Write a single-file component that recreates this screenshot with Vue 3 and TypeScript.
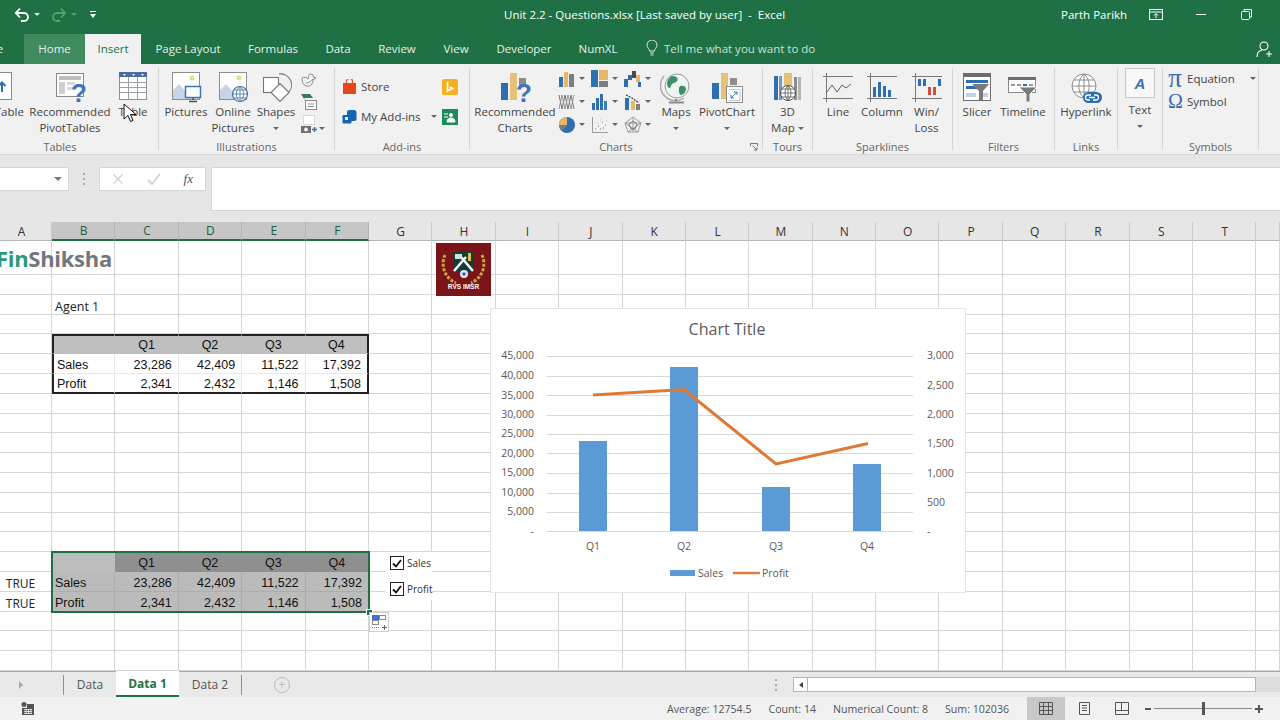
<script setup lang="ts">
interface Cell {
  text?: string
  cls: string[]
}

const columns = 'ABCDEFGHIJKLMNOPQRST'.split('').concat('')
const rowCount = 21
const selectedCols = 'BCDEF'

const table = [
  ['', 'Q1', 'Q2', 'Q3', 'Q4'],
  ['Sales', '23,286', '42,409', '11,522', '17,392'],
  ['Profit', '2,341', '2,432', '1,146', '1,508'],
]

const cells: Record<string, Cell> = {}
const at = (r: number, c: number): Cell => {
  const key = `${r}-${c}`
  if (!cells[key]) cells[key] = { cls: [] }
  return cells[key]
}

function placeTable(top: number, selected: boolean) {
  table.forEach((row, i) => {
    row.forEach((text, j) => {
      const cell = at(top + i, j + 1)
      cell.text = text
      cell.cls.push('arial', i === 0 ? 'centre' : j === 0 ? 'label' : 'num')
      if (selected) {
        cell.cls.push(i === 0 ? (j === 0 ? 'sel-corner' : 'sel-head') : 'sel-body')
      } else {
        cell.cls.push(i === 0 ? 'head' : 'plain')
        if (i === 0) cell.cls.push('t-top')
        if (i === 2) cell.cls.push('t-bottom')
        if (j === 0) cell.cls.push('t-left')
        if (j === 4) cell.cls.push('t-right')
      }
    })
  })
}

placeTable(4, false)
placeTable(15, true)
at(2, 1).text = 'Agent 1'
at(2, 1).cls.push('label', 'over')
at(16, 0).text = 'TRUE'
at(16, 0).cls.push('bool')
at(17, 0).text = 'TRUE'
at(17, 0).cls.push('bool')

const sheetCells: { key: string; r: number; c: number; text?: string; cls: string[] }[] = []
for (let r = 0; r < rowCount; r++) {
  for (let c = 0; c < columns.length; c++) {
    const found = cells[`${r}-${c}`]
    sheetCells.push({ key: `${r}-${c}`, r, c, text: found?.text, cls: found?.cls ?? [] })
  }
}

// chart data, in page coordinates so it can be read against the screenshot
const baseY = 531
const gridYs = [356, 376, 395, 415, 434, 453, 473, 493, 512, 531]
const leftAxis = [
  ['45,000', 355], ['40,000', 375], ['35,000', 395], ['30,000', 414], ['25,000', 433],
  ['20,000', 453], ['15,000', 472], ['10,000', 492], ['5,000', 511], ['-', 531],
] as const
const rightAxis = [
  ['3,000', 355], ['2,500', 385], ['2,000', 414], ['1,500', 443], ['1,000', 473], ['500', 502], ['-', 531],
] as const
const bars = [
  { name: 'Q1', x: 579, top: 441 },
  { name: 'Q2', x: 670, top: 367 },
  { name: 'Q3', x: 762, top: 487 },
  { name: 'Q4', x: 853, top: 464 },
]
const profitLine = '593,395 684,389.5 776,464 868,443.5'
</script>

<template>
  <div class="excel">
    <header class="titlebar">
      <div class="qat">
        <svg class="undo" width="18" height="18" viewBox="0 0 18 18" fill="none" stroke="#fff" stroke-width="1.8">
          <path d="M3 7h8a4 4 0 0 1 0 8H8" />
          <path d="M7 2.5 2.8 7 7 11.5" />
        </svg>
        <i class="caret white"></i>
        <svg class="redo" width="18" height="18" viewBox="0 0 18 18" fill="none" stroke="#5c9c79" stroke-width="1.8">
          <path d="M15 7H7a4 4 0 0 0 0 8h3" />
          <path d="M11 2.5 15.200 7 11 11.500" />
        </svg>
        <i class="caret dim"></i>
        <svg class="custom" width="8" height="8" viewBox="0 0 8 8" fill="#fff">
          <rect x="1" y="0" width="6" height="1" />
          <path d="M1 3h6L4 7z" />
        </svg>
      </div>
      <div class="doc-title">Unit 2.2 - Questions.xlsx [Last saved by user]&nbsp; -&nbsp; Excel</div>
      <div class="user">Parth Parikh</div>
      <svg class="win-a" width="14" height="12" viewBox="0 0 14 12" fill="none" stroke="#fff">
        <rect x="0.500" y="0.500" width="13" height="10" />
        <path d="M0.500 3h13M7 9V5M5 6.500l2-2 2 2" />
      </svg>
      <i class="win-min"></i>
      <svg class="win-max" width="11" height="11" viewBox="0 0 11 11" fill="none" stroke="#fff">
        <rect x="0.500" y="2.500" width="8" height="8" rx="1" />
        <path d="M3 2.500V0.500h7.500V8H8.500" />
      </svg>
    </header>

    <nav class="tabs">
      <span class="tab file">File</span>
      <span class="tab home">Home</span>
      <span class="tab insert">Insert</span>
      <span class="tab t94">Page Layout</span>
      <span class="tab t76">Formulas</span>
      <span class="tab t54">Data</span>
      <span class="tab t64">Review</span>
      <span class="tab t54">View</span>
      <span class="tab t82">Developer</span>
      <span class="tab t66">NumXL</span>
      <svg class="bulb" width="12" height="16" viewBox="0 0 12 16" fill="none" stroke="#d5e6dc">
        <path d="M3.500 11C3.500 8.500 1 8 1 5a5 5 0 0 1 10 0c0 3-2.500 3.500-2.500 6z" />
        <path d="M4 13h4M4.500 15h3" />
      </svg>
      <span class="tell">Tell me what you want to do</span>
      <svg class="share" width="17" height="17" viewBox="0 0 17 17" fill="none" stroke="#fff" stroke-width="1.100">
        <circle cx="8" cy="5" r="4" />
        <path d="M1 16c0-4 2.500-6.500 5-7M10 13h6M13 10v6" />
      </svg>
    </nav>

    <section class="ribbon">
      <!-- Tables -->
      <div class="group g-tables">
        <div class="body pl5">
          <div class="rb w58">
            <svg width="32" height="32" viewBox="0 0 32 32">
              <rect x="4.500" y="0.500" width="27" height="27" fill="#fff" stroke="#8a8a8a" />
              <path d="M22 20v-9M18.500 14l3.500-3.500 3.500 3.500" fill="none" stroke="#2f6db5" stroke-width="2" />
            </svg>
            <span>PivotTable</span>
          </div>
          <div class="rb w84 ml3">
            <svg width="32" height="32" viewBox="0 0 32 32">
              <rect x="2.500" y="1.500" width="27" height="23" fill="#fff" stroke="#8a8a8a" />
              <rect x="5" y="4" width="22" height="4" fill="#bdbdbd" />
              <rect x="5" y="10" width="6" height="12" fill="#cfcfcf" />
              <rect x="13" y="10" width="8" height="3" fill="#d8d8d8" />
              <rect x="13" y="15" width="6" height="3" fill="#d8d8d8" />
              <text x="17" y="30" class="qmark">?</text>
            </svg>
            <span>Recommended<br />PivotTables</span>
          </div>
          <div class="rb w42">
            <svg width="32" height="32" viewBox="0 0 32 32">
              <rect x="2.500" y="0.500" width="27" height="27" fill="#fff" stroke="#8b8f98" />
              <rect x="2" y="0" width="28" height="5" fill="#4c6c9c" />
              <path d="M6 2h3L7.500 4zM15 2h3l-1.500 2zM24 2h3l-1.500 2z" fill="#fff" />
              <path d="M2.500 10.500h27M2.500 15.500h27M2.500 20.500h27M11.500 5v22M20.500 5v22" stroke="#9a9ea6" fill="none" />
            </svg>
            <span>Table</span>
          </div>
        </div>
        <div class="caption">Tables</div>
      </div>
      <i class="sep"></i>

      <!-- Illustrations -->
      <div class="group g-illus">
        <div class="body pl6">
          <div class="rb w42">
            <svg width="32" height="32" viewBox="0 0 32 32">
              <rect x="2.500" y="0.500" width="27" height="27" fill="#fff" stroke="#8d8d8d" />
              <circle cx="22" cy="6" r="2.500" fill="#ecd98a" />
              <path d="M3 27V18l6-6 8 9 3-2 9 8z" fill="#c9d5e6" />
              <rect x="15.500" y="14.500" width="15" height="11" fill="#fff" stroke="#3a78a8" stroke-width="1.500" />
              <path d="M23 26v2M19 29.500h8" stroke="#4e4e4e" stroke-width="1.500" />
            </svg>
            <span>Pictures</span>
          </div>
          <div class="rb w46 ml3">
            <svg width="32" height="32" viewBox="0 0 32 32">
              <rect x="2.500" y="0.500" width="27" height="27" fill="#fff" stroke="#8d8d8d" />
              <circle cx="22" cy="6" r="2.500" fill="#ecd98a" />
              <path d="M3 27V18l6-6 8 9 3-2 9 8z" fill="#c9d5e6" />
              <circle cx="23" cy="22" r="7.500" fill="#fff" stroke="#40729e" stroke-width="1.200" />
              <path d="M15.500 22h15M23 14.500v15M17 18h12M17 26h12M23 14.500c-5 4-5 11 0 15M23 14.500c5 4 5 11 0 15" fill="none" stroke="#40729e" stroke-width="0.800" />
            </svg>
            <span>Online<br />Pictures</span>
          </div>
          <div class="rb w40">
            <svg width="32" height="32" viewBox="0 0 32 32" fill="none" stroke="#777" stroke-width="1.100">
              <path d="M19 2a11 11 0 0 1 9 19" />
              <rect x="3.500" y="5.500" width="15" height="15" fill="#fff" />
              <path d="M20 11.500 29 20.500 20 29.500 11 20.500z" fill="#fff" />
            </svg>
            <span>Shapes</span>
            <i class="caret lone"></i>
          </div>
          <div class="mini-stack">
            <svg width="18" height="18" viewBox="0 0 18 18" fill="none" stroke="#8a8a8a">
              <path d="M2 7c2-1 4-1 6 1 1-3 0-5 3-5 2 0 3 2 2 3l3 1-3 2c0 4-3 7-6 6-3 0-5-3-5-8z" />
              <path d="M6 12c3 0 5-2 7-4" stroke="#7fa489" />
            </svg>
            <svg width="18" height="18" viewBox="0 0 18 18">
              <path d="M1 1h9l3 4H4l2 4z" fill="#2f7d5a" />
              <rect x="5.500" y="7.500" width="11" height="9" fill="#fff" stroke="#8a8a8a" />
              <path d="M8 11h6M8 13.500h6" stroke="#8a8a8a" />
            </svg>
            <div class="shot">
              <svg width="18" height="20" viewBox="0 0 18 20">
                <rect x="3.500" y="0.500" width="11" height="9" fill="#fff" stroke="#bbb" stroke-dasharray="1 1" />
                <rect x="1" y="11" width="10" height="7" fill="#6f6f6f" />
                <circle cx="6" cy="14.500" r="2" fill="#f1f1f1" />
                <path d="M12 14.500h5M14.500 12v5" stroke="#40729e" stroke-width="1.500" />
              </svg>
              <i class="caret"></i>
            </div>
          </div>
        </div>
        <div class="caption">Illustrations</div>
      </div>
      <i class="sep"></i>

      <!-- Add-ins -->
      <div class="group g-addins">
        <div class="body pl7">
          <div class="addin-rows">
            <div class="addin-row">
              <svg width="15" height="15" viewBox="0 0 15 15">
                <path d="M1 4h13v11H1z" fill="#e5471f" />
                <path d="M4.500 5V2.500a3 3 0 0 1 6 0V5" fill="none" stroke="#e5471f" stroke-width="1.200" />
              </svg>
              <span>Store</span>
            </div>
            <div class="addin-row">
              <svg width="15" height="15" viewBox="0 0 15 15" fill="#1464b4">
                <rect x="0.500" y="6" width="9" height="8.500" rx="1" />
                <rect x="5" y="1" width="9.500" height="11" rx="2.500" />
                <rect x="3" y="8" width="3" height="3" fill="#f1f1f1" />
              </svg>
              <span>My Add-ins</span>
              <i class="caret push"></i>
            </div>
          </div>
          <div class="addin-side">
            <svg width="16" height="16" viewBox="0 0 16 16">
              <rect width="16" height="16" rx="2" fill="#f6b01e" />
              <path d="M5.500 3v9l5-2.500-2.500-1.500" fill="none" stroke="#fff" stroke-width="1.700" />
            </svg>
            <svg width="16" height="16" viewBox="0 0 16 16">
              <rect width="16" height="16" fill="#1c8a5a" />
              <circle cx="9" cy="6" r="2" fill="#fff" />
              <path d="M2 5h4M2 8h4M5 13c0-3 2-4 4-4s4 1 4 4z" stroke="#fff" fill="#fff" />
            </svg>
          </div>
        </div>
        <div class="caption">Add-ins</div>
      </div>
      <i class="sep"></i>

      <!-- Charts -->
      <div class="group g-charts">
        <div class="body pl5">
          <div class="rb w80">
            <svg width="32" height="32" viewBox="0 0 32 32">
              <rect x="2" y="11" width="7" height="17" fill="#2f6fb0" />
              <rect x="11" y="1" width="7" height="27" fill="#e4c27a" />
              <rect x="20" y="6" width="7" height="8" fill="#8c8c8c" />
              <text x="17" y="30" class="qmark">?</text>
            </svg>
            <span>Recommended<br />Charts</span>
          </div>
          <div class="mini-grid">
            <div class="mini">
              <svg width="18" height="18" viewBox="0 0 18 18">
                <rect x="1" y="7" width="4" height="10" fill="#2f6fb0" /><rect x="6" y="2" width="4" height="15" fill="#e4b865" /><rect x="11" y="4" width="5" height="13" fill="#7d7d7d" />
              </svg>
              <i class="caret"></i>
            </div>
            <div class="mini">
              <svg width="18" height="18" viewBox="0 0 18 18">
                <rect x="0" y="0" width="7" height="17" fill="#2f6fb0" /><rect x="8" y="0" width="9" height="10" fill="#e4b865" /><rect x="8" y="11" width="9" height="6" fill="#7d7d7d" />
              </svg>
              <i class="caret"></i>
            </div>
            <div class="mini">
              <svg width="18" height="18" viewBox="0 0 18 18">
                <rect x="0" y="9" width="4" height="8" fill="#2f6fb0" /><rect x="4" y="5" width="4" height="5" fill="#2f6fb0" /><rect x="8" y="1" width="4" height="7" fill="#4a4a4a" /><rect x="12" y="5" width="4" height="7" fill="#e4b865" /><rect x="14" y="12" width="3" height="5" fill="#2f6fb0" />
              </svg>
              <i class="caret"></i>
            </div>
            <div class="mini">
              <svg width="18" height="18" viewBox="0 0 18 18" fill="none" stroke="#666" stroke-width="0.900">
                <path d="M1 2l3 14 3-14 3 14 3-14 3 14" /><path d="M1 16l3-14 3 14 3-14 3 14 3-14" stroke="#8d8d8d" />
              </svg>
              <i class="caret"></i>
            </div>
            <div class="mini">
              <svg width="18" height="18" viewBox="0 0 18 18">
                <rect x="1" y="10" width="3" height="7" fill="#2f6fb0" /><rect x="5" y="5" width="3" height="12" fill="#2f6fb0" /><rect x="9" y="1" width="3" height="16" fill="#2f6fb0" /><rect x="13" y="8" width="3" height="9" fill="#3b80bf" />
              </svg>
              <i class="caret"></i>
            </div>
            <div class="mini">
              <svg width="18" height="18" viewBox="0 0 18 18">
                <rect x="1" y="5" width="4" height="12" fill="#2f6fb0" /><rect x="7" y="8" width="4" height="9" fill="#e4b865" /><rect x="12" y="11" width="4" height="6" fill="#7d7d7d" />
                <path d="M2 2l6 3 7 5" fill="none" stroke="#444" stroke-width="1.200" stroke-dasharray="2 1" />
              </svg>
              <i class="caret"></i>
            </div>
            <div class="mini">
              <svg width="18" height="18" viewBox="0 0 18 18">
                <circle cx="9" cy="9" r="8" fill="#2f6fb0" /><path d="M9 9V1a8 8 0 0 0-8 8z" fill="#e4b865" /><path d="M9 9H1a8 8 0 0 0 3 6z" fill="#7d7d7d" />
              </svg>
              <i class="caret"></i>
            </div>
            <div class="mini">
              <svg width="18" height="18" viewBox="0 0 18 18" fill="none">
                <path d="M1.500 1v15.500H17" stroke="#9a9a9a" />
                <path d="M4 13h1M7 10h1M9 13h1M11 6h1M14 9h1M12 12h1" stroke="#557aa5" />
                <path d="M6 7h1M9 4h1M15 5h1" stroke="#d9b36a" />
              </svg>
              <i class="caret"></i>
            </div>
            <div class="mini">
              <svg width="18" height="18" viewBox="0 0 18 18" fill="none" stroke="#8c8c8c" stroke-width="0.800">
                <path d="M9 1l8 6-3 9H4L1 7z" /><path d="M9 1v15M1 7l13 9M17 7 4 16M1 7h16" /><path d="M9 5l4 3-2 5H7L5 8z" stroke="#666" />
              </svg>
              <i class="caret"></i>
            </div>
          </div>
          <div class="rb w38">
            <svg width="32" height="32" viewBox="0 0 32 32">
              <path d="M4 4a15 15 0 0 0 20 22" fill="none" stroke="#a9a9a9" stroke-width="1.500" />
              <circle cx="17" cy="14" r="12" fill="#eef4f1" stroke="#9a9a9a" />
              <path d="M12 4c4 0 7 2 5 5s-5 1-6 5-4 1-4-2 2-7 5-8zM20 14c3-1 6 0 6 3s-3 6-5 6-3-7-1-9z" fill="#3d8f68" />
              <path d="M16 27v2M9 30.500h15" stroke="#8a8a8a" stroke-width="2" />
            </svg>
            <span>Maps</span>
            <i class="caret lone"></i>
          </div>
          <div class="rb w64">
            <svg width="32" height="32" viewBox="0 0 32 32">
              <rect x="1" y="11" width="7" height="16" fill="#2f6fb0" />
              <rect x="10" y="1" width="7" height="26" fill="#e4c27a" />
              <rect x="19" y="6" width="7" height="7" fill="#8c8c8c" />
              <rect x="15.500" y="14.500" width="16" height="16" fill="#fff" stroke="#8a8a8a" />
              <path d="M18 17.500h11v11H18" fill="none" stroke="#c4c4c4" />
              <path d="M20 26l6-6M23 20h3v3M20 23v3h3" fill="none" stroke="#3a78a8" />
            </svg>
            <span>PivotChart</span>
            <i class="caret lone"></i>
          </div>
        </div>
        <div class="caption">Charts</div>
        <svg class="launcher" width="8" height="8" viewBox="0 0 8 8" fill="none" stroke="#777">
          <path d="M0.500 3V0.500H7.500V3" /><path d="M2.500 2.500 7 7M7 4v3H4" />
        </svg>
      </div>
      <i class="sep"></i>

      <!-- Tours -->
      <div class="group g-tours">
        <div class="body">
          <div class="rb w49">
            <svg width="32" height="32" viewBox="0 0 32 32">
              <rect x="2" y="4" width="4" height="24" fill="#2f6fb0" /><rect x="7" y="4" width="3" height="24" fill="#6f9cc9" />
              <rect x="12" y="1" width="8" height="14" fill="#e4c27a" />
              <rect x="22" y="5" width="3" height="23" fill="#8c8c8c" /><rect x="26" y="5" width="3" height="23" fill="#b4b4b4" />
              <circle cx="16" cy="21" r="7.500" fill="#fff" stroke="#555" />
              <path d="M8.500 21h15M16 13.500v15M10 17h12M10 25h12M16 13.500c-4 4-4 11 0 15M16 13.500c4 4 4 11 0 15" fill="none" stroke="#555" stroke-width="0.800" />
            </svg>
            <span>3D<br />Map <i class="caret inline"></i></span>
          </div>
        </div>
        <div class="caption">Tours</div>
      </div>
      <i class="sep"></i>

      <!-- Sparklines -->
      <div class="group g-spark">
        <div class="body">
          <div class="rb w50">
            <svg width="32" height="32" viewBox="0 0 32 32" fill="none" stroke="#777">
              <path d="M1 4.500h30M1 26.500h30M4.500 1v29" />
              <path d="M5 20l5-7 5 7 5-7 4 3 5-4" stroke="#5c5c5c" />
            </svg>
            <span>Line</span>
          </div>
          <div class="rb w38">
            <svg width="32" height="32" viewBox="0 0 32 32">
              <path d="M1 4.500h30M1 26.500h30M4.500 1v29" fill="none" stroke="#777" />
              <rect x="7" y="15" width="3" height="10" fill="#2f6fb0" /><rect x="12" y="10" width="3" height="15" fill="#2f6fb0" /><rect x="17" y="14" width="3" height="11" fill="#2f6fb0" /><rect x="22" y="18" width="3" height="7" fill="#2f6fb0" />
            </svg>
            <span>Column</span>
          </div>
          <div class="rb w51">
            <svg width="32" height="32" viewBox="0 0 32 32">
              <path d="M1 4.500h30M1 26.500h30M4.500 1v29" fill="none" stroke="#777" />
              <rect x="7" y="7" width="3" height="7" fill="#2f6fb0" /><rect x="12" y="7" width="3" height="7" fill="#2f6fb0" /><rect x="17" y="15" width="3" height="8" fill="#c8533a" /><rect x="22" y="15" width="3" height="8" fill="#c8533a" /><rect x="27" y="7" width="3" height="7" fill="#2f6fb0" />
            </svg>
            <span>Win/<br />Loss</span>
          </div>
        </div>
        <div class="caption">Sparklines</div>
      </div>
      <i class="sep"></i>

      <!-- Filters -->
      <div class="group g-filters">
        <div class="body">
          <div class="rb w48">
            <svg width="32" height="32" viewBox="0 0 32 32">
              <rect x="2.500" y="1.500" width="27" height="27" fill="#fff" stroke="#6e6e6e" />
              <rect x="2" y="1" width="28" height="4" fill="#6e6e6e" />
              <rect x="5" y="8" width="22" height="3" fill="#2e6eb0" />
              <rect x="5" y="14" width="11" height="3" fill="#2e6eb0" />
              <rect x="5" y="21" width="10" height="4" fill="#c5d2e3" />
              <rect x="21" y="21" width="6" height="4" fill="#c5d2e3" />
              <path d="M11 12h17l-6 7v9h-4v-9z" fill="#7a7a7a" />
            </svg>
            <span>Slicer</span>
          </div>
          <div class="rb w44">
            <svg width="32" height="32" viewBox="0 0 32 32">
              <rect x="1.500" y="5.500" width="27" height="15" fill="#fff" stroke="#8a8a8a" />
              <rect x="1" y="5" width="28" height="3" fill="#6e6e6e" />
              <path d="M4 13h4M10 13h4" stroke="#9a9a9a" stroke-width="2" />
              <path d="M16 13h4" stroke="#2e6eb0" stroke-width="2" />
              <path d="M22 13h4" stroke="#9a9a9a" stroke-width="2" />
              <path d="M12 15h18l-7 7v8h-4v-8z" fill="#7a7a7a" stroke="#f1f1f1" />
            </svg>
            <span>Timeline</span>
          </div>
        </div>
        <div class="caption">Filters</div>
      </div>
      <i class="sep"></i>

      <!-- Links -->
      <div class="group g-links">
        <div class="body">
          <div class="rb w62">
            <svg width="32" height="32" viewBox="0 0 32 32">
              <circle cx="14" cy="14" r="12" fill="#fff" stroke="#8c8c8c" />
              <path d="M2 14h24M14 2v24M4 8h20M4 20h20M14 2c-7 6-7 18 0 24M14 2c7 6 7 18 0 24" fill="none" stroke="#8c8c8c" />
              <rect x="13" y="20" width="19" height="11" rx="5.500" fill="#2b6cb0" />
              <path d="M21 23h-3a2.500 2.500 0 0 0 0 5h2M24 23h2a2.500 2.500 0 0 1 0 5h-3M19 25.500h6" fill="none" stroke="#fff" stroke-width="1.300" />
            </svg>
            <span>Hyperlink</span>
          </div>
        </div>
        <div class="caption">Links</div>
      </div>
      <i class="sep"></i>

      <!-- Text -->
      <div class="group g-text">
        <div class="text-btn">
          <div class="text-box"><span>A</span></div>
          <span>Text</span>
          <i class="caret lone"></i>
        </div>
      </div>
      <i class="sep"></i>

      <!-- Symbols -->
      <div class="group g-symbols">
        <div class="body pl5 symbols">
          <div class="sym-row"><b class="sym-glyph pi">π</b><span>Equation</span><i class="caret"></i></div>
          <div class="sym-row"><b class="sym-glyph">Ω</b><span>Symbol</span></div>
        </div>
        <div class="caption">Symbols</div>
      </div>
      <i class="sep"></i>
    </section>

    <section class="formula">
      <div class="name-box"><i class="caret grey"></i></div>
      <i class="grip"></i>
      <div class="fx-box">
        <svg width="12" height="12" viewBox="0 0 12 12" stroke="#d2d2d2" stroke-width="1.400" fill="none"><path d="M1.500 1.500l9 9M10.500 1.500l-9 9" /></svg>
        <svg width="14" height="12" viewBox="0 0 14 12" stroke="#d2d2d2" stroke-width="1.800" fill="none"><path d="M1 7l4 4 8-10" /></svg>
        <em>fx</em>
      </div>
      <div class="input"></div>
    </section>

    <div class="col-head">
      <div
        v-for="col in columns"
        :key="col"
        class="col"
        :class="{ on: col !== '' && selectedCols.includes(col), first: col === 'A' }"
      >
        {{ col }}
      </div>
    </div>

    <main class="sheet">
      <div
        v-for="c in sheetCells"
        :key="c.key"
        class="cell"
        :class="c.cls"
        :style="{ gridRow: c.r + 1, gridColumn: c.c + 1 }"
      >
        {{ c.text }}
      </div>
      <div class="brand"><span class="fin">Fin</span><span class="shik">Shiksha</span></div>
      <div class="selection">
        <i class="handle"></i>
        <svg class="quick" width="20" height="20" viewBox="0 0 20 20">
          <rect x="0.500" y="0.500" width="19" height="19" fill="#fff" stroke="#cfcfcf" />
          <rect x="3" y="3" width="7" height="5" fill="#3f6fcf" />
          <rect x="10.500" y="3.500" width="6" height="4" fill="#fff" stroke="#8a8a8a" />
          <rect x="3.500" y="8.500" width="6" height="4" fill="#fff" stroke="#8a8a8a" />
          <path d="M3 15.500h8" stroke="#777" stroke-dasharray="1 1" />
          <path d="M13 15.500h5M15.500 13v5" stroke="#666" />
        </svg>
      </div>

      <svg class="logo" width="55" height="53" viewBox="0 0 55 53">
        <rect width="55" height="53" fill="#7b1418" />
        <path d="M9 12a21 21 0 0 0 11 28M46 12a21 21 0 0 1-11 28" fill="none" stroke="#c9a33f" stroke-width="3" stroke-dasharray="3 1.500" />
        <path d="M17 9h21v16l-10 9-11-9z" fill="#123f34" />
        <path d="M18 28 30 14M37 28 25 14" stroke="#fff" stroke-width="2.500" />
        <rect x="19" y="11" width="7" height="5" fill="#cfe0e8" />
        <rect x="32" y="10" width="3" height="8" fill="#d8c24a" />
        <circle cx="28" cy="31" r="4" fill="#dfe6f4" />
        <circle cx="28" cy="31" r="1.800" fill="#4a5fb5" />
        <text x="27.500" y="46" class="logo-text">RVS IMSR</text>
      </svg>

      <div class="chart">
        <svg width="474" height="283" viewBox="491 309 474 283">
          <text x="727" y="335" class="c-title">Chart Title</text>
          <path
            v-for="y in gridYs"
            :key="y"
            :d="`M547 ${y + 0.5}H913`"
            stroke="#d9d9d9"
            fill="none"
          />
          <rect
            v-for="bar in bars"
            :key="bar.name"
            :x="bar.x"
            :y="bar.top"
            width="28"
            :height="baseY - bar.top"
            fill="#5b9bd5"
          />
          <polyline :points="profitLine" fill="none" stroke="#de7a33" stroke-width="3" />
          <text v-for="t in leftAxis" :key="t[0]" x="534" :y="t[1] + 4" class="c-label end">{{ t[0] }}</text>
          <text v-for="t in rightAxis" :key="t[0]" x="927" :y="t[1] + 4" class="c-label">{{ t[0] }}</text>
          <text v-for="bar in bars" :key="bar.name" :x="bar.x + 14" y="550" class="c-label mid">{{ bar.name }}</text>
          <rect x="670" y="570" width="25" height="6" fill="#5b9bd5" />
          <text x="698" y="577" class="c-label">Sales</text>
          <path d="M733 573H760" stroke="#de7a33" stroke-width="2.400" />
          <text x="762" y="577" class="c-label">Profit</text>
        </svg>
      </div>

      <div class="checks">
        <label class="check"><i><svg width="10" height="9" viewBox="0 0 10 9" fill="none" stroke="#111" stroke-width="1.800"><path d="M1 4.500 4 7.500 9 1" /></svg></i>Sales</label>
        <label class="check"><i><svg width="10" height="9" viewBox="0 0 10 9" fill="none" stroke="#111" stroke-width="1.800"><path d="M1 4.500 4 7.500 9 1" /></svg></i>Profit</label>
      </div>
    </main>

    <footer class="sheet-tabs">
      <i class="prev"></i>
      <i class="bar"></i>
      <span class="s-tab w52">Data</span>
      <span class="s-tab w63 active">Data 1</span>
      <span class="s-tab w62">Data 2</span>
      <i class="bar"></i>
      <span class="add">+</span>
      <i class="grip h"></i>
      <div class="h-scroll"><span class="arrow"></span></div>
      <div class="h-rest"></div>
    </footer>

    <footer class="status">
      <svg class="macro" width="14" height="14" viewBox="0 0 14 14">
        <circle cx="3" cy="2.500" r="2.500" fill="#555" />
        <path d="M6 2h7v11H1V6h5z" fill="#555" />
        <path d="M3 7.500h8M3 9.500h8M3 11.500h8M5 7v5M7.500 7v5M10 7v5" stroke="#f1f1f1" stroke-width="0.800" />
      </svg>
      <div class="stats">
        <span>Average: 12754.5</span>
        <span>Count: 14</span>
        <span>Numerical Count: 8</span>
        <span>Sum: 102036</span>
      </div>
      <div class="views">
        <div class="view active">
          <svg width="14" height="13" viewBox="0 0 14 13" fill="none" stroke="#555">
            <path d="M0.500 0.500h13v12h-13zM0.500 4.500h13M0.500 8.500h13M4.500 0.500v12M9.500 0.500v12" />
          </svg>
        </div>
        <div class="view">
          <svg width="11" height="13" viewBox="0 0 11 13" fill="none" stroke="#555">
            <path d="M0.500 0.500h10v12h-10zM3 3.500h5M3 6h5M3 8.500h5" />
          </svg>
        </div>
        <div class="view">
          <svg width="14" height="13" viewBox="0 0 14 13" fill="none" stroke="#555">
            <path d="M0.500 0.500h13v12h-13zM0.500 8.500h13M6.500 0.500v8" />
          </svg>
        </div>
      </div>
      <div class="zoom">
        <i class="z-minus"></i>
        <div class="z-track"><i class="z-thumb"></i></div>
        <i class="z-plus"></i>
      </div>
    </footer>

    <svg class="cursor" width="14" height="21" viewBox="0 0 14 21">
      <path d="M1 1v15l4-3.500 2.500 6 2.500-1-2.500-6H13z" fill="#fff" stroke="#111" />
    </svg>
  </div>
</template>

<style>
html,
body {
  margin: 0;
  background: #fff;
  overflow: hidden;
}
</style>

<style scoped>
.excel {
  position: relative;
  display: flex;
  flex-direction: column;
  width: 1280px;
  height: 720px;
  overflow: hidden;
  font-family: 'Open Sans', 'Noto Sans', sans-serif;
  font-size: 11.5px;
  color: #444;
}
i {
  display: block;
  font-style: normal;
}
svg {
  display: block;
  flex: none;
}

/* title bar + tabs */
.titlebar {
  display: flex;
  align-items: center;
  height: 32px;
  flex: none;
  padding-bottom: 3px;
  box-sizing: border-box;
  background: #1f7145;
  color: #fff;
  font-size: 11.5px;
}
.qat {
  display: flex;
  align-items: center;
  width: 504px;
  flex: none;
  padding-left: 13px;
  box-sizing: border-box;
}
.redo {
  margin-left: 10px;
}
.custom {
  margin-left: 12px;
}
.doc-title {
  width: 557px;
  flex: none;
  white-space: nowrap;
}
.user {
  width: 88px;
  flex: none;
}
.win-min {
  width: 10px;
  height: 1px;
  background: #fff;
  margin-left: 33px;
}
.win-max {
  margin-left: 35px;
}
.tabs {
  display: flex;
  align-items: stretch;
  height: 32px;
  flex: none;
  padding-top: 2px;
  box-sizing: border-box;
  background: #1f7145;
  color: #e4f0e9;
  font-size: 11.5px;
}
.tab {
  display: flex;
  align-items: center;
  justify-content: center;
  flex: none;
  padding-bottom: 2px;
  box-sizing: border-box;
}
.file {
  width: 60px;
  margin-left: -36px;
}
.home {
  width: 61px;
  background: #3f8a5f;
}
.insert {
  width: 56px;
  background: #f1f1f1;
  color: #217346;
}
.t94 {
  width: 94px;
}
.t76 {
  width: 76px;
}
.t54 {
  width: 54px;
}
.t64 {
  width: 64px;
}
.t82 {
  width: 82px;
}
.t66 {
  width: 66px;
}
.bulb {
  align-self: center;
  margin-left: 15px;
  margin-bottom: 2px;
}
.tell {
  align-self: center;
  margin-left: 6px;
  margin-bottom: 2px;
  color: #c9e0d3;
  white-space: nowrap;
}
.share {
  align-self: center;
  margin-left: auto;
  margin-right: 7px;
}

/* ribbon */
.ribbon {
  display: flex;
  height: 91px;
  flex: none;
  padding-top: 4px;
  box-sizing: border-box;
  background: #f1f1f1;
  overflow: hidden;
  border-bottom: 1px solid #d8d8d8;
}
.sep {
  width: 1px;
  height: 82px;
  flex: none;
  background: #d4d4d4;
}
.group {
  position: relative;
  display: flex;
  flex-direction: column;
  flex: none;
}
.g-tables {
  width: 196px;
  margin-left: -38px;
}
.g-illus {
  width: 175px;
}
.g-addins {
  width: 134px;
}
.g-charts {
  width: 292px;
}
.g-tours {
  width: 49px;
}
.g-spark {
  width: 139px;
}
.g-filters {
  width: 101px;
}
.g-links {
  width: 62px;
}
.g-text {
  width: 44px;
}
.g-symbols {
  width: 95px;
}
.body {
  display: flex;
  height: 68px;
  flex: none;
  box-sizing: border-box;
  padding-top: 4px;
}
.pl5 {
  padding-left: 5px;
}
.pl6 {
  padding-left: 6px;
}
.pl7 {
  padding-left: 7px;
}
.ml3 {
  margin-left: 3px;
}
.caption {
  text-align: center;
  line-height: 22px;
  font-size: 11px;
  color: #666;
}
.launcher {
  position: absolute;
  right: 4px;
  top: 75px;
}
.rb {
  display: flex;
  flex-direction: column;
  align-items: center;
  flex: none;
  text-align: center;
  line-height: 16px;
  white-space: nowrap;
}
.w38 { width: 38px; }
.w40 { width: 40px; }
.w42 { width: 42px; }
.w44 { width: 44px; }
.w46 { width: 46px; }
.w48 { width: 48px; }
.w49 { width: 49px; }
.w50 { width: 50px; }
.w51 { width: 51px; }
.w52 { width: 52px; }
.w58 { width: 58px; }
.w62 { width: 62px; }
.w63 { width: 63px; }
.w64 { width: 64px; }
.w80 { width: 80px; }
.w84 { width: 84px; }
.qmark {
  font-family: 'Liberation Sans', sans-serif;
  font-size: 26px;
  font-weight: 700;
  fill: #3f74b5;
}
.caret {
  width: 0;
  height: 0;
  flex: none;
  border-left: 3px solid transparent;
  border-right: 3px solid transparent;
  border-top: 3px solid #666;
}
.caret.white {
  border-top-color: #d8e8df;
  margin-left: 3px;
}
.caret.dim {
  border-top-color: #5c9c79;
  margin-left: 3px;
}
.caret.grey {
  border-left-width: 4px;
  border-right-width: 4px;
  border-top-width: 4px;
  border-top-color: #777;
}
.caret.lone {
  margin-top: 7px;
}
.caret.inline {
  display: inline-block;
  vertical-align: middle;
}
.mini-stack {
  display: flex;
  flex-direction: column;
  align-items: flex-start;
  gap: 4px;
  margin-left: 4px;
  margin-top: -1px;
}
.shot {
  display: flex;
  align-items: flex-start;
  gap: 1px;
}
.shot .caret {
  margin-top: 12px;
}
.addin-rows {
  display: flex;
  flex-direction: column;
  gap: 8px;
  width: 100px;
  flex: none;
  padding-top: 3px;
}
.addin-row {
  display: flex;
  align-items: center;
  gap: 4px;
  height: 22px;
}
.push {
  margin-left: auto;
  margin-right: 5px;
}
.addin-side {
  display: flex;
  flex-direction: column;
  gap: 14px;
  padding-top: 7px;
}
.mini-grid {
  display: grid;
  grid-template-columns: repeat(3, 33px);
  grid-auto-rows: 23px;
  width: 99px;
  flex: none;
  margin: -5px 0 0 3px;
}
.mini {
  display: flex;
  align-items: center;
  gap: 3px;
}
.text-btn {
  display: flex;
  flex-direction: column;
  align-items: center;
  line-height: 16px;
}
.text-box {
  display: flex;
  align-items: center;
  justify-content: center;
  width: 30px;
  height: 30px;
  margin-bottom: 4px;
  border: 1px solid #c8c8c8;
  box-sizing: border-box;
  background: #f8f8f8;
}
.text-box span {
  font: italic 700 15px 'Liberation Sans', sans-serif;
  color: #3c6db0;
}
.symbols {
  flex-direction: column;
  padding-top: 0;
  gap: 3px;
}
.sym-row {
  display: flex;
  align-items: center;
  height: 20px;
  gap: 5px;
}
.sym-row .caret {
  margin-left: 10px;
}
.sym-glyph {
  width: 14px;
  text-align: center;
  font: 400 20px 'Liberation Serif', serif;
  line-height: 20px;
  color: #3c6db0;
}
.sym-glyph.pi {
  font-size: 27px;
  line-height: 20px;
}

/* formula bar */
.formula {
  display: flex;
  align-items: flex-start;
  height: 67px;
  flex: none;
  padding-top: 12px;
  box-sizing: border-box;
  background: #e6e6e6;
}
.name-box {
  display: flex;
  align-items: center;
  justify-content: flex-end;
  width: 69px;
  height: 24px;
  flex: none;
  padding-right: 6px;
  box-sizing: border-box;
  background: #fff;
  border: 1px solid #d6d6d6;
  border-left: 0;
}
.grip {
  width: 2px;
  height: 12px;
  flex: none;
  margin: 6px 14px 0;
  background: repeating-linear-gradient(#aaa 0 2px, transparent 2px 5px);
}
.fx-box {
  display: flex;
  align-items: center;
  justify-content: space-between;
  width: 107px;
  height: 24px;
  flex: none;
  padding: 0 12px;
  box-sizing: border-box;
  background: #fff;
  border: 1px solid #d6d6d6;
}
.fx-box em {
  font: italic 13px 'Liberation Serif', serif;
  color: #555;
}
.input {
  flex: 1;
  height: 44px;
  margin-left: 5px;
  background: #fff;
  border: 1px solid #d6d6d6;
  border-right: 0;
  box-sizing: border-box;
}

/* columns + cells */
.col-head,
.sheet {
  display: grid;
  grid-template-columns: 52px repeat(19, 63.4px) 1fr;
}
.col-head {
  height: 19px;
  flex: none;
  box-sizing: border-box;
  background: #e6e6e6;
  border-bottom: 1px solid #b5b5b5;
  font-size: 12px;
  color: #333;
}
.col {
  display: flex;
  align-items: center;
  justify-content: center;
  padding-left: 1px;
  border-right: 1px solid #c9c9c9;
  box-sizing: border-box;
}
.col.first {
  padding-right: 9px;
}
.col.on {
  height: 19px;
  background: #c6c6c6;
  color: #1f5f3f;
  border-bottom: 2px solid #1f6f45;
  border-right-color: #b3b3b3;
}
.sheet {
  position: relative;
  height: 430px;
  flex: none;
  grid-template-rows: 34px repeat(20, 19.8px);
  background: #fff;
  overflow: hidden;
  font-size: 12.5px;
  color: #222;
}
.cell {
  display: flex;
  align-items: flex-end;
  min-width: 0;
  line-height: 15px;
  border-right: 1px solid #d6d6d6;
  border-bottom: 1px solid #d6d6d6;
  box-sizing: border-box;
  white-space: nowrap;
}
.arial {
  font-family: 'Liberation Sans', Arial, sans-serif;
  font-size: 12.5px;
  color: #111;
}
.centre {
  justify-content: center;
}
.label {
  padding-left: 3px;
}
.num {
  justify-content: flex-end;
  padding-right: 6px;
}
.bool {
  justify-content: center;
  padding-right: 10px;
  font-size: 12px;
}
.head {
  background: #bfbfbf;
  border-color: #bfbfbf;
}
.plain {
  border-right-color: #e8e8e8;
  border-bottom-color: #e8e8e8;
}
.cell.t-top {
  border-top: 2px solid #222;
}
.cell.t-bottom {
  border-bottom: 2px solid #222;
}
.cell.t-left {
  border-left: 2px solid #222;
}
.cell.t-right {
  border-right: 2px solid #222;
}
.sel-corner {
  background: #bdbdbd;
  border-color: #bdbdbd;
}
.sel-head {
  background: #8f8f8f;
  border-color: #8f8f8f;
}
.sel-body {
  background: #bbb;
  border-color: #adadad;
}
.brand {
  grid-row: 1;
  grid-column: 1 / 4;
  align-self: center;
  margin-left: -4px;
  font: 700 22px 'Open Sans', sans-serif;
  letter-spacing: -0.3px;
  white-space: nowrap;
  z-index: 1;
  line-height: 34px;
}
.fin {
  color: #2a9a78;
}
.shik {
  color: #747679;
}
.selection {
  position: relative;
  grid-row: 16 / 19;
  grid-column: 2 / 7;
  margin: -1px;
  border: 2px solid #1f6f45;
  z-index: 2;
}
.handle {
  position: absolute;
  right: -5px;
  bottom: -5px;
  width: 5px;
  height: 5px;
  background: #1f6f45;
  border: 1px solid #fff;
}
.quick {
  position: absolute;
  left: calc(100% + 1px);
  top: calc(100% + 1px);
}
.logo {
  position: absolute;
  left: 436px;
  top: 2px;
  z-index: 3;
}
.logo-text {
  font: 700 6.5px 'Liberation Sans', sans-serif;
  fill: #fff;
  text-anchor: middle;
}
.chart {
  position: absolute;
  left: 490px;
  top: 67px;
  background: #fff;
  border: 1px solid #e6e6e6;
  z-index: 3;
}
.c-title {
  font: 16px 'Open Sans', sans-serif;
  fill: #595959;
  text-anchor: middle;
}
.c-label {
  font: 10.5px 'Open Sans', sans-serif;
  fill: #595959;
}
.end {
  text-anchor: end;
}
.mid {
  text-anchor: middle;
}
.checks {
  position: absolute;
  left: 385px;
  top: 311px;
  display: flex;
  flex-direction: column;
  gap: 4px;
  padding: 0 0 0 5px;
  width: 42px;
  background: #fff;
  z-index: 3;
}
.check {
  display: flex;
  align-items: center;
  gap: 3px;
  height: 22px;
  font-size: 10px;
  color: #333;
}
.check i {
  display: flex;
  align-items: center;
  justify-content: center;
  width: 12px;
  height: 12px;
  flex: none;
  border: 1px solid #222;
  background: #fff;
}

/* sheet tabs */
.sheet-tabs {
  display: flex;
  align-items: stretch;
  height: 26px;
  flex: none;
  background: #e9e9e9;
  border-top: 1px solid #a8a8a8;
  box-sizing: border-box;
  font-size: 12px;
  color: #555;
}
.prev {
  width: 0;
  height: 0;
  align-self: center;
  margin-left: 19px;
  border-left: 4px solid #aaa;
  border-top: 4px solid transparent;
  border-bottom: 4px solid transparent;
}
.bar {
  width: 1px;
  height: 20px;
  align-self: center;
  flex: none;
  background: #8f8f8f;
  margin-left: 40px;
}
.s-tab {
  display: flex;
  align-items: center;
  justify-content: center;
  flex: none;
}
.s-tab.active {
  margin-top: -1px;
  background: #fff;
  color: #217346;
  font-weight: 700;
  border-bottom: 2px solid #217346;
}
.s-tab + .bar {
  margin-left: 0;
}
.add {
  align-self: center;
  display: flex;
  align-items: center;
  justify-content: center;
  width: 14px;
  height: 14px;
  margin-left: 32px;
  border: 1px solid #bbb;
  border-radius: 50%;
  color: #bbb;
  font-size: 12px;
  line-height: 1;
}
.grip.h {
  align-self: center;
  margin: 0 0 0 485px;
}
.h-scroll {
  align-self: center;
  width: 463px;
  height: 15px;
  flex: none;
  margin-left: 16px;
  background: #fff;
  border: 1px solid #b5b5b5;
  box-sizing: border-box;
}
.arrow {
  display: flex;
  align-items: center;
  justify-content: center;
  width: 14px;
  height: 13px;
  border-right: 1px solid #b5b5b5;
  box-sizing: border-box;
}
.arrow::before {
  content: '';
  border-right: 4px solid #444;
  border-top: 3px solid transparent;
  border-bottom: 3px solid transparent;
}
.h-rest {
  align-self: center;
  flex: 1;
  height: 15px;
  background: #dcdcdc;
}

/* status bar */
.status {
  display: flex;
  align-items: center;
  height: 23px;
  flex: none;
  background: #f1f1f1;
  font-size: 10.6px;
  color: #555;
}
.macro {
  margin-left: 21px;
  margin-right: 632px;
}
.stats {
  display: flex;
  gap: 17px;
  white-space: nowrap;
  width: 360px;
  flex: none;
}
.views {
  display: flex;
  align-self: stretch;
}
.view {
  display: flex;
  align-items: center;
  justify-content: center;
  width: 38px;
}
.view.active {
  background: #c8c8c8;
}
.zoom {
  display: flex;
  align-items: center;
  margin-left: 4px;
}
.z-minus {
  width: 6px;
  height: 2px;
  background: #555;
}
.z-track {
  position: relative;
  width: 98px;
  height: 1px;
  margin: 0 3px;
  background: #888;
}
.z-thumb {
  position: absolute;
  left: 48px;
  top: -6px;
  width: 3px;
  height: 13px;
  background: #555;
}
.z-plus {
  position: relative;
  width: 8px;
  height: 2px;
  background: #555;
}
.z-plus::after {
  content: '';
  position: absolute;
  left: 3px;
  top: -3px;
  width: 2px;
  height: 8px;
  background: #555;
}

.cursor {
  position: absolute;
  left: 123px;
  top: 103px;
  z-index: 5;
}
</style>
